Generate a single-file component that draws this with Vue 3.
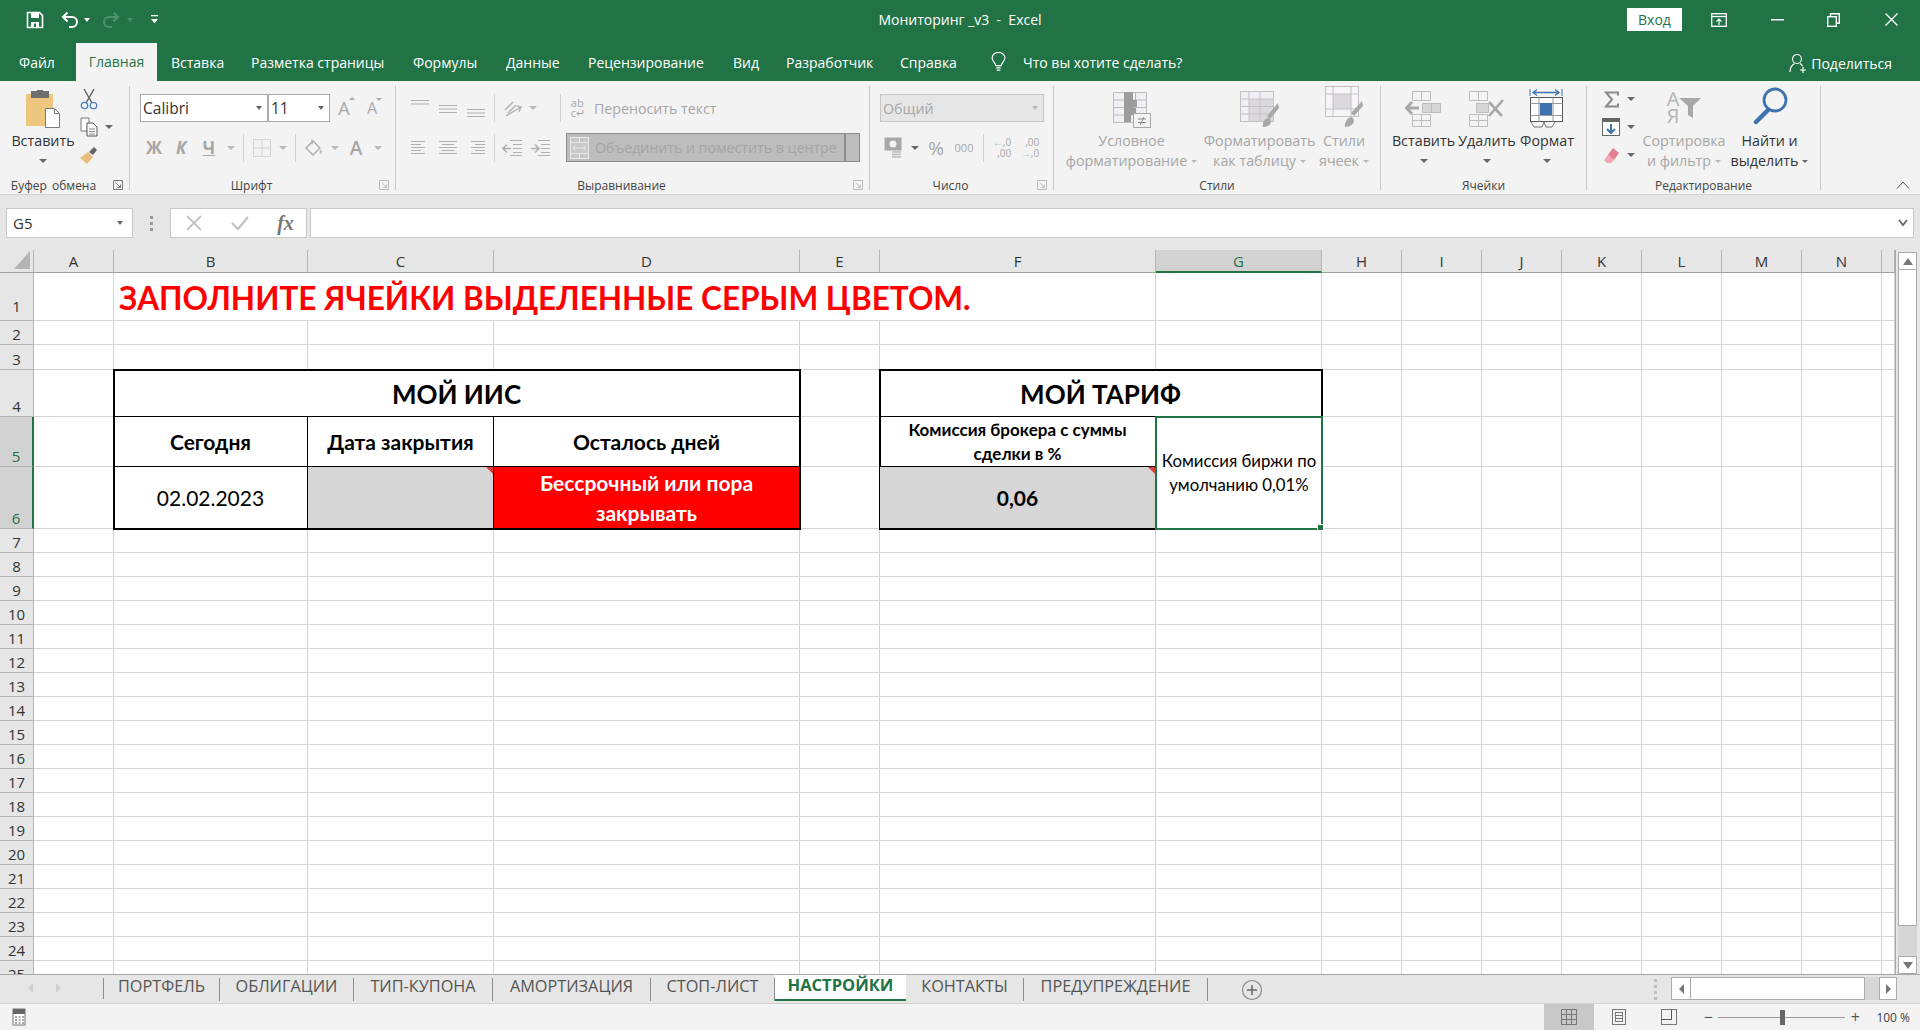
<script setup>
const columns = ['A', 'B', 'C', 'D', 'E', 'F', 'G', 'H', 'I', 'J', 'K', 'L', 'M', 'N', '']
const rows = Array.from({ length: 25 }, (_, i) => i + 1)

const menu = ['Вставка', 'Разметка страницы', 'Формулы', 'Данные', 'Рецензирование', 'Вид', 'Разработчик', 'Справка']
const sheets = ['ПОРТФЕЛЬ', 'ОБЛИГАЦИИ', 'ТИП-КУПОНА', 'АМОРТИЗАЦИЯ', 'СТОП-ЛИСТ', 'НАСТРОЙКИ', 'КОНТАКТЫ', 'ПРЕДУПРЕЖДЕНИЕ']

// y of the lines in each vertical alignment glyph
const alignTop = [
  { y: 2, lines: [0, 1] },
  { y: 7, lines: [0, 1, 2] },
  { y: 11, lines: [0, 1, 2] }
]
// x1/x2 of the lines in each horizontal alignment glyph
const alignLeft = [
  [[1, 15], [1, 11], [1, 15], [1, 11], [1, 15]],
  [[1, 19], [4, 16], [1, 19], [4, 16], [1, 19]],
  [[5, 19], [9, 19], [5, 19], [9, 19], [5, 19]]
]
</script>

<template>
  <div class="app">
    <header class="titlebar">
      <div class="qat">
        <svg class="q-save" width="18" height="18" viewBox="0 0 18 18"><path d="M1.5 1.5h12l3 3v12h-15z" fill="none" stroke="#fff" stroke-width="1.6"/><rect x="5" y="2" width="8" height="5" fill="#fff"/><rect x="5" y="11" width="8" height="5" fill="#fff"/><rect x="8" y="12.5" width="2" height="3.5" fill="#217346"/></svg>
        <svg class="q-undo" width="20" height="18" viewBox="0 0 20 18"><path d="M3 6h9a4.6 4.6 0 0 1 0 10H9" fill="none" stroke="#fff" stroke-width="2"/><path d="M7.5 1.5 3 6l4.5 4.5" fill="none" stroke="#fff" stroke-width="2"/></svg>
        <i class="caret white q-c1"></i>
        <svg class="q-redo" width="20" height="18" viewBox="0 0 20 18"><path d="M17 6H8a4.6 4.6 0 0 0 0 10h3" fill="none" stroke="#4f9272" stroke-width="2"/><path d="M12.500 1.500 17 6l-4.500 4.500" fill="none" stroke="#4f9272" stroke-width="2"/></svg>
        <i class="caret dim q-c2"></i>
        <svg class="q-more" width="7" height="9" viewBox="0 0 7 9"><rect y="0" width="7" height="1.300" fill="#fff"/><path d="M0 4h7L3.500 8.500z" fill="#fff"/></svg>
      </div>
      <div class="doc-title">Мониторинг _v3&nbsp; - &nbsp;Excel</div>
      <div class="win">
        <span class="signin">Вход</span>
        <svg class="w-opt" width="16" height="14" viewBox="0 0 16 14"><rect x=".7" y=".7" width="14.600" height="12.600" fill="none" stroke="#fff" stroke-width="1.300"/><path d="M1 3.500h14" stroke="#fff" stroke-width="1.300"/><path d="M8 12V6.500M5.500 8.500 8 6l2.500 2.500" fill="none" stroke="#fff" stroke-width="1.200"/></svg>
        <svg class="w-min" width="13" height="2" viewBox="0 0 13 2"><rect width="13" height="1.500" fill="#fff"/></svg>
        <svg class="w-max" width="13" height="14" viewBox="0 0 13 14"><rect x=".7" y="3.700" width="8.600" height="9.600" fill="none" stroke="#fff" stroke-width="1.400"/><path d="M3.500 3.500V.7h8.800v9.600H9.500" fill="none" stroke="#fff" stroke-width="1.400"/></svg>
        <svg class="w-close" width="13" height="13" viewBox="0 0 13 13"><path d="M.5.5l12 12M12.500.5l-12 12" stroke="#fff" stroke-width="1.400"/></svg>
      </div>
    </header>

    <nav class="tabs">
      <span class="tab-file">Файл</span>
      <span class="tab-home">Главная</span>
      <div class="menu">
        <span v-for="m in menu" :key="m">{{ m }}</span>
      </div>
      <svg class="bulb" width="15" height="20" viewBox="0 0 16 22"><path d="M5 15c0-3-4-4.500-4-8.500a7 6 0 0 1 14 0c0 4-4 5.500-4 8.500z" fill="none" stroke="#fff" stroke-width="1.300"/><path d="M5.500 17.500h5M6 20h4" stroke="#fff" stroke-width="1.500"/></svg>
      <span class="tell">Что вы хотите сделать?</span>
      <span class="share">
        <svg width="18" height="20" viewBox="0 0 18 20"><circle cx="8" cy="6" r="4.500" fill="none" stroke="#fff" stroke-width="1.200"/><path d="M1 19c0-4 2-7 4.500-8.500M11 10.500c1 .6 2 1.600 2.500 2.800" fill="none" stroke="#fff" stroke-width="1.200"/><path d="M14 14v6M11 17h6" stroke="#fff" stroke-width="1.200"/></svg>
        Поделиться
      </span>
    </nav>

    <section class="ribbon">
      <div class="grp g-clip">
        <div class="grp-body">
          <div class="big b-paste">
            <div class="big-icon">
              <svg width="36" height="38" viewBox="0 0 36 38"><rect x="1" y="4" width="27" height="32" fill="#eec77e"/><rect x="6" y="1" width="18" height="7" fill="#6f6f6f"/><rect x="12" y="0" width="6" height="3" fill="#6f6f6f"/><path d="M20.500 18.500h9l5 5v14h-14z" fill="#fff" stroke="#7a7a7a"/><path d="M29.500 18.500v5h5" fill="none" stroke="#7a7a7a"/></svg>
            </div>
            <div class="big-text on">Вставить</div>
            <div class="big-text"><i class="caret"></i></div>
          </div>
          <div class="clip-tools">
            <svg width="18" height="22" viewBox="0 0 18 22"><path d="M4 1l8 14M14 1 6 15" stroke="#666" stroke-width="1.500"/><circle cx="4.500" cy="17.500" r="3.200" fill="none" stroke="#4a7ebb" stroke-width="1.300"/><circle cx="13.500" cy="17.500" r="3.200" fill="none" stroke="#4a7ebb" stroke-width="1.300"/></svg>
            <span></span>
            <svg width="18" height="20" viewBox="0 0 18 20"><path d="M1 1h8v13H1z" fill="#fff" stroke="#777"/><path d="M7 6h6l4 4v9H7z" fill="#fff" stroke="#555"/><path d="M9 12h6M9 14.500h6M9 17h6" stroke="#888"/></svg>
            <i class="caret"></i>
            <svg width="20" height="18" viewBox="0 0 20 18"><path d="M1 12l8-6 5 5-6 7z" fill="#e7bf7a"/><path d="M10 6l5-5 3 3-4 5z" fill="#666"/></svg>
            <span></span>
          </div>
        </div>
        <div class="grp-label shift">Буфер обмена</div>
        <svg class="launcher" width="10" height="10" viewBox="0 0 10 10"><path d="M.5 9.500V.5h9v9zM2.500 2.500l5 5M7.500 4.500v3h-3" fill="none" stroke="#777"/></svg>
      </div>

      <div class="grp g-font">
        <div class="grp-body col">
          <div class="r1 font-r1">
            <div class="combo">Calibri<i class="caret"></i></div>
            <div class="combo">11<i class="caret"></i></div>
            <span class="glyph-a">A<i class="up"></i></span>
            <span class="glyph-a small">A<i class="down"></i></span>
          </div>
          <div class="r2 font-r2">
            <b class="fmt">Ж</b>
            <b class="fmt it">К</b>
            <b class="fmt un">Ч</b>
            <i class="caret off"></i>
            <i class="vsep"></i>
            <svg width="18" height="18" viewBox="0 0 18 18"><path d="M.5.5h17v17H.5zM9 .5v17M.5 9h17" fill="none" stroke="#b5b5b5" stroke-dasharray="1 1"/></svg>
            <i class="caret off"></i>
            <i class="vsep"></i>
            <svg width="20" height="20" viewBox="0 0 20 20"><path d="M2 10l7-7 7 7-7 7z" fill="none" stroke="#a8a8a8" stroke-width="1.300"/><path d="M8 1.500v5" stroke="#a8a8a8"/><path d="M17 11c-1 2-2 3-1 5 2 0 2.500-3 1-5z" fill="#bdbdbd"/></svg>
            <i class="caret off"></i>
            <span class="fmt-a">A</span>
            <i class="caret off"></i>
          </div>
        </div>
        <div class="grp-label shift">Шрифт</div>
        <svg class="launcher" width="10" height="10" viewBox="0 0 10 10"><path d="M.5 9.500V.5h9v9zM2.500 2.500l5 5M7.500 4.500v3h-3" fill="none" stroke="#bbb"/></svg>
      </div>

      <div class="grp g-align">
        <div class="grp-body col">
          <div class="r1 align-r1">
            <svg v-for="a in alignTop" :key="a.y" width="20" height="20" viewBox="0 0 20 20">
              <path v-for="l in a.lines" :key="l" :d="`M1 ${a.y + l * 3.500 + .5}h18`" stroke="#b0b0b0"/>
            </svg>
            <i class="vsep"></i>
            <svg width="22" height="20" viewBox="0 0 22 20"><path d="M3 12l8-8M6 15l8-8" stroke="#b0b0b0" stroke-width="1.500"/><path d="M4 18l15-9-4-1M19 9l-2 5" fill="none" stroke="#b0b0b0" stroke-width="1.300"/></svg>
            <i class="caret off"></i>
            <span></span>
            <i class="vsep"></i>
            <span class="wrap-ab"><span>ab</span><span>c↵</span></span>
            <span class="off-text">Переносить текст</span>
          </div>
          <div class="r2 align-r2">
            <svg v-for="(a, k) in alignLeft" :key="k" width="20" height="16" viewBox="0 0 20 16">
              <path v-for="(l, i) in a" :key="i" :d="`M${l[0]} ${i * 3 + 1.500}H${l[1]}`" stroke="#b0b0b0"/>
            </svg>
            <i class="vsep"></i>
            <svg width="20" height="18" viewBox="0 0 20 18"><path d="M8 1.500h12M11 5.500h9M11 9.500h9M11 13.500h9M8 16.500h12" stroke="#b0b0b0"/><path d="M9 9.500H1M5 5.500l-4 4 4 4" fill="none" stroke="#b0b0b0" stroke-width="1.600"/></svg>
            <svg width="20" height="18" viewBox="0 0 20 18"><path d="M8 1.500h12M11 5.500h9M11 9.500h9M11 13.500h9M8 16.500h12" stroke="#b0b0b0"/><path d="M1 9.500h8M5 5.500l4 4-4 4" fill="none" stroke="#b0b0b0" stroke-width="1.600"/></svg>
            <span></span>
            <div class="merge">
              <svg width="20" height="22" viewBox="0 0 20 22"><rect x=".5" y=".5" width="18" height="21" fill="#c8c8c8" stroke="#e8e8e8"/><path d="M.5 5.500h18M.5 16.500h18M9.500 .5v5M9.500 16.500v5" stroke="#e8e8e8"/><path d="M3 11h13M5.500 8.500 3 11l2.500 2.500M13.500 8.500 16 11l-2.500 2.500" fill="none" stroke="#e8e8e8"/></svg>
              <span class="merge-text">Объединить и поместить в центре</span>
              <span class="merge-drop"></span>
            </div>
          </div>
        </div>
        <div class="grp-label shift">Выравнивание</div>
        <svg class="launcher" width="10" height="10" viewBox="0 0 10 10"><path d="M.5 9.500V.5h9v9zM2.500 2.500l5 5M7.500 4.500v3h-3" fill="none" stroke="#bbb"/></svg>
      </div>

      <div class="grp g-num">
        <div class="grp-body col">
          <div class="r1">
            <div class="combo off-combo">Общий<i class="caret off"></i></div>
          </div>
          <div class="r2 num-r2">
            <svg width="20" height="22" viewBox="0 0 20 22"><rect x=".5" y=".5" width="17" height="13" fill="#a8a8a8"/><circle cx="9" cy="7" r="3.500" fill="#f3f3f3"/><path d="M8 15h9M8 17.500h9M8 20h9" stroke="#bbb" stroke-width="1.500"/></svg>
            <i class="caret"></i>
            <span class="pct">%</span>
            <span class="thou">000</span>
            <i class="vsep"></i>
            <span class="dec"><span>←,0</span><span>,00</span></span>
            <span class="dec"><span>,00</span><span>→,0</span></span>
          </div>
        </div>
        <div class="grp-label shift">Число</div>
        <svg class="launcher" width="10" height="10" viewBox="0 0 10 10"><path d="M.5 9.500V.5h9v9zM2.500 2.500l5 5M7.500 4.500v3h-3" fill="none" stroke="#bbb"/></svg>
      </div>

      <div class="grp g-styles">
        <div class="grp-body">
          <div class="big b-cond">
            <div class="big-icon">
              <svg width="38" height="36" viewBox="0 0 38 36"><path d="M.5.5h33v30H.5zM.5 8h33M.5 15.500h33M.5 23h33M11.500.5v30M22.500.5v30" fill="#f1eef4" stroke="#bcbcbc"/><path d="M11 0h9v8h4v7h-4v1h3v7h-5v7h-7z" fill="#9d9d9d"/><rect x="20.500" y="21.500" width="17" height="14" fill="#f3f3f3" stroke="#a8a8a8"/><path d="M25 27h8M25 30.500h8M31 25l-4 8" stroke="#8a8a8a"/></svg>
            </div>
            <div class="big-text">Условное</div>
            <div class="big-text">форматирование<i class="caret off after"></i></div>
          </div>
          <div class="big b-table">
            <div class="big-icon">
              <svg width="40" height="38" viewBox="0 0 40 38"><rect x=".5" y="1.500" width="33" height="30" fill="#f1eef4" stroke="#c2c2c2"/><rect x="9" y="9" width="24" height="22" fill="#dcd9de"/><path d="M.5 9h33M.5 16.500h33M.5 24h33M9 1.500v30M20 1.500v30" stroke="#c2c2c2"/><path d="M38 13l1 5-9 11-3-3z" fill="#a8a8a8"/><path d="M23 37c-1-5 2-9 6-9l2 3c0 4-4 6-8 6z" fill="#a8a8a8"/></svg>
            </div>
            <div class="big-text">Форматировать</div>
            <div class="big-text">как таблицу<i class="caret off after"></i></div>
          </div>
          <div class="big b-cellstyle">
            <div class="big-icon">
              <svg width="38" height="42" viewBox="0 0 38 42"><rect x=".5" y=".5" width="33" height="30" fill="#f6f4f7" stroke="#c2c2c2"/><rect x="8" y="8" width="18" height="15" fill="#dcd9de"/><path d="M.5 8h33M.5 23h33M8 .5v30M26 .5v30" stroke="#c2c2c2"/><path d="M37 15l1 5-9 10-3-3z" fill="#a8a8a8"/><path d="M20 41c-1-5 3-10 7-10l2 3c0 4-4 7-9 7z" fill="#a8a8a8"/></svg>
            </div>
            <div class="big-text">Стили</div>
            <div class="big-text">ячеек<i class="caret off after"></i></div>
          </div>
        </div>
        <div class="grp-label">Стили</div>
      </div>

      <div class="grp g-cells">
        <div class="grp-body">
          <div class="big b-cell1">
            <div class="big-icon">
              <svg width="38" height="38" viewBox="0 0 38 38"><path d="M7.500 1.500h18v9h-18zM16.500 1.500v9M7.500 24.500h18v12h-18zM16.500 24.500v12M7.500 30.500h18" fill="none" stroke="#bdbdbd"/><path d="M17.500 13.500h18v9h-18zM26.500 13.500v9" fill="#d6d6d6" stroke="#bdbdbd"/><path d="M14 18H2M7 12l-5.500 6L7 24" fill="none" stroke="#a8a8a8" stroke-width="3"/></svg>
            </div>
            <div class="big-text on">Вставить</div>
            <div class="big-text"><i class="caret"></i></div>
          </div>
          <div class="big b-cell2">
            <div class="big-icon">
              <svg width="38" height="38" viewBox="0 0 38 38"><path d="M1.500 1.500h18v9h-18zM10.500 1.500v9M1.500 24.500h18v12h-18zM10.500 24.500v12M1.500 30.500h18" fill="none" stroke="#bdbdbd"/><path d="M8.500 13.500h12v9h-12z" fill="#d6d6d6" stroke="#bdbdbd"/><path d="M21 12l13 14M35 10 21 26" stroke="#a8a8a8" stroke-width="2.600"/></svg>
            </div>
            <div class="big-text on">Удалить</div>
            <div class="big-text"><i class="caret"></i></div>
          </div>
          <div class="big b-cell3">
            <div class="big-icon">
              <svg width="36" height="40" viewBox="0 0 36 40"><path d="M1 1v7M33 1v7" stroke="#3e74ad"/><path d="M4 4.500h26M8 1.500 4 4.500l4 3M26 1.500l4 3-4 3" fill="none" stroke="#3e74ad" stroke-width="1.300"/><rect x="1.500" y="9.500" width="32" height="24" fill="#fff" stroke="#555"/><path d="M1.500 15.500h32M1.500 27.500h32M10 9.500v24M24 9.500v24" stroke="#999"/><rect x="11" y="15" width="12" height="12" fill="#3e74ad"/><path d="M2 34l3 5h8l2-5M15 34l2 5h6l3-5" fill="none" stroke="#777"/></svg>
            </div>
            <div class="big-text on">Формат</div>
            <div class="big-text"><i class="caret"></i></div>
          </div>
        </div>
        <div class="grp-label">Ячейки</div>
      </div>

      <div class="grp g-edit">
        <div class="grp-body">
          <div class="edit-tools">
            <svg width="15" height="17" viewBox="0 0 15 17"><path d="M14 4.500V1.500H2l6 7-6 7h12v-3" fill="none" stroke="#8a8a8a" stroke-width="2"/></svg>
            <i class="caret"></i>
            <svg width="18" height="18" viewBox="0 0 18 18"><rect x=".5" y=".5" width="17" height="17" fill="#fff" stroke="#666"/><rect x="1" y="1" width="16" height="3" fill="#666"/><path d="M9 6v9M5 11l4 4 4-4" fill="none" stroke="#3e74ad" stroke-width="2"/></svg>
            <i class="caret"></i>
            <svg width="17" height="17" viewBox="0 0 17 17"><path d="M10 1l6 5-5 7-6-5z" fill="#e57e92"/><path d="M5 8l6 5-3 3H4l-3-3z" fill="#f2a6b4"/></svg>
            <i class="caret"></i>
          </div>
          <div class="big b-sort">
            <div class="big-icon">
              <span class="sort-az"><span>А</span><span>Я</span></span>
              <svg class="funnel" width="22" height="22" viewBox="0 0 22 22"><path d="M0 1h22l-8 8v12l-5-3V9z" fill="#a8a8a8"/></svg>
            </div>
            <div class="big-text">Сортировка</div>
            <div class="big-text">и фильтр<i class="caret off after"></i></div>
          </div>
          <div class="big b-find">
            <div class="big-icon">
              <svg width="38" height="40" viewBox="0 0 38 40"><circle cx="24" cy="15" r="11" fill="none" stroke="#3e74ad" stroke-width="2.800"/><path d="M17 25 5 37" stroke="#3e74ad" stroke-width="4.500" stroke-linecap="round"/></svg>
            </div>
            <div class="big-text on">Найти и</div>
            <div class="big-text on">выделить<i class="caret after"></i></div>
          </div>
        </div>
        <div class="grp-label">Редактирование</div>
      </div>

      <div class="ribbon-end">
        <svg width="14" height="8" viewBox="0 0 14 8"><path d="M1 7.500 7 1l6 6.500" fill="none" stroke="#555"/></svg>
      </div>
    </section>

    <section class="fbar">
      <div class="namebox">G5<i class="caret"></i></div>
      <div class="fdots"><i></i><i></i><i></i></div>
      <div class="fbtns">
        <svg width="16" height="16" viewBox="0 0 16 16"><path d="M1 1l14 14M15 1 1 15" stroke="#c4c4c4" stroke-width="1.800"/></svg>
        <svg width="18" height="16" viewBox="0 0 18 16"><path d="M1 8l6 6L17 2" fill="none" stroke="#c4c4c4" stroke-width="2.400"/></svg>
        <span class="fx">fx</span>
      </div>
      <div class="finput">
        <svg width="10" height="8" viewBox="0 0 10 8"><path d="M1 1l4 5 4-5" fill="none" stroke="#666" stroke-width="1.800"/></svg>
      </div>
    </section>

    <section class="sheet-area">
      <div class="sheet">
        <!-- empty worksheet: headers and gridlines -->
        <div class="layer">
          <div class="corner"><i></i></div>
          <div v-for="c in columns" :key="c" class="col-head" :class="{ sel: c === 'G' }">{{ c }}</div>
          <template v-for="r in rows" :key="r">
            <div class="row-head" :class="{ sel: r === 5 || r === 6, first: r === 1 }"><span>{{ r }}</span></div>
            <div v-for="c in columns" :key="c" class="cell"></div>
          </template>
        </div>

        <!-- filled cells sit on the same tracks -->
        <div class="layer">
          <div class="title-cell">ЗАПОЛНИТЕ ЯЧЕЙКИ ВЫДЕЛЕННЫЕ СЕРЫМ ЦВЕТОМ.</div>

          <div class="box iis">
            <div class="tc head-xl span3">МОЙ ИИС</div>
            <div class="tc head-md">Сегодня</div>
            <div class="tc head-md">Дата закрытия</div>
            <div class="tc head-md">Осталось дней</div>
            <div class="tc plain-lg">02.02.2023</div>
            <div class="tc fill-grey note"></div>
            <div class="tc fill-red">Бессрочный или пора<br>закрывать</div>
          </div>

          <div class="box tariff">
            <div class="tc head-xl span2">МОЙ ТАРИФ</div>
            <div class="tc head-sm">Комиссия брокера с суммы<br>сделки в %</div>
            <div class="tc fill-grey note value">0,06</div>
          </div>

          <div class="selected">Комиссия биржи по<br>умолчанию 0,01%</div>
        </div>
      </div>

      <div class="vscroll">
        <div class="sb-btn"><svg width="10" height="7" viewBox="0 0 10 7"><path d="M5 0l5 7H0z" fill="#777"/></svg></div>
        <div class="sb-thumb"></div>
        <div class="sb-track"></div>
        <div class="sb-btn"><svg width="10" height="7" viewBox="0 0 10 7"><path d="M0 0h10L5 7z" fill="#777"/></svg></div>
      </div>
    </section>

    <section class="sheetbar">
      <div class="nav-arrows">
        <svg width="5" height="10" viewBox="0 0 5 10"><path d="M5 0v10L0 5z" fill="#cfcfcf"/></svg>
        <svg width="5" height="10" viewBox="0 0 5 10"><path d="M0 0v10l5-5z" fill="#cfcfcf"/></svg>
      </div>
      <div class="sheet-tabs">
        <span v-for="s in sheets" :key="s" class="stab" :class="{ active: s === 'НАСТРОЙКИ' }">{{ s }}</span>
      </div>
      <svg class="add" width="22" height="22" viewBox="0 0 22 22"><circle cx="11" cy="11" r="9.500" fill="none" stroke="#8a8a8a" stroke-width="1.200"/><path d="M11 6v10M6 11h10" stroke="#666" stroke-width="1.500"/></svg>
      <div class="hdots"><i></i><i></i><i></i><i></i></div>
      <div class="hscroll">
        <div class="hb-btn"><svg width="5" height="10" viewBox="0 0 5 10"><path d="M5 0v10L0 5z" fill="#777"/></svg></div>
        <div class="hb-thumb"></div>
        <div class="hb-track"></div>
        <div class="hb-btn end"><svg width="5" height="10" viewBox="0 0 5 10"><path d="M0 0v10l5-5z" fill="#777"/></svg></div>
      </div>
    </section>

    <footer class="status">
      <svg class="st-icon" width="14" height="18" viewBox="0 0 14 18"><rect x="1" y="1" width="12" height="16" fill="#fff" stroke="#777"/><rect x="1" y="1" width="12" height="5" fill="#666"/><path d="M3 9h2M6.500 9h2M10 9h2M3 12h2M6.500 12h2M10 12h2M3 15h2M6.500 15h2M10 15h2" stroke="#555"/></svg>
      <div class="st-right">
        <span class="view on">
          <svg width="16" height="16" viewBox="0 0 16 16"><path d="M.5.5h15v15H.5zM5.500.5v15M10.500.5v15M.5 5.500h15M.5 10.500h15" fill="none" stroke="#777"/></svg>
        </span>
        <span class="view">
          <svg width="14" height="16" viewBox="0 0 14 16"><rect x=".5" y=".5" width="13" height="15" fill="none" stroke="#777"/><rect x="3.500" y="3.500" width="7" height="9" fill="none" stroke="#777"/><path d="M3.500 6.500h7M3.500 9.500h7" stroke="#777"/></svg>
        </span>
        <span class="view">
          <svg width="16" height="16" viewBox="0 0 16 16"><rect x=".5" y=".5" width="15" height="15" fill="none" stroke="#777"/><path d="M.5 10.500h10V.5" fill="none" stroke="#555"/></svg>
        </span>
        <div class="zoom">
          <span class="z-sign">−</span>
          <div class="slider"><i></i></div>
          <span class="z-sign">+</span>
          <span class="z-val">100 %</span>
        </div>
      </div>
    </footer>
  </div>
</template>

<style>
html, body { margin: 0; overflow: hidden; background: #fff; }
</style>

<style scoped>
.app {
  width: 1920px;
  height: 1030px;
  overflow: hidden;
  display: flex;
  flex-direction: column;
  font-family: "Open Sans", "Noto Sans", sans-serif;
  font-size: 14px;
  color: #444;
}

/* title bar */
.titlebar {
  height: 43px;
  flex: none;
  background: #217346;
  color: #fff;
  display: grid;
  grid-template-columns: 1fr 190px 1fr;
  align-items: center;
}
.qat { display: flex; align-items: center; padding-left: 26px; margin-top: -4px; }
.q-undo { margin-left: 16px; }
.q-c1 { margin-left: 4px; }
.q-redo { margin-left: 11px; }
.q-c2 { margin-left: 6px; }
.q-more { margin-left: 18px; }
.doc-title { white-space: nowrap; text-align: center; margin-top: -4px; font-size: 14px; }
.win { display: flex; align-items: center; justify-content: flex-end; margin-top: -4px; }
.signin {
  width: 55px;
  height: 23px;
  background: #fff;
  color: #217346;
  text-align: center;
  line-height: 23px;
  font-size: 14px;
}
.w-opt { margin-left: 29px; }
.w-min { margin-left: 44px; }
.w-max { margin-left: 43px; }
.w-close { margin: 0 22px 0 45px; }

/* tab row */
.tabs {
  height: 38px;
  flex: none;
  background: #217346;
  color: #fff;
  display: flex;
  align-items: center;
  font-size: 14px;
  white-space: nowrap;
}
.tab-file { margin-left: 19px; width: 57px; }
.tab-home {
  width: 81px;
  height: 38px;
  line-height: 38px;
  text-align: center;
  background: #f3f3f3;
  color: #217346;
  margin-right: 14px;
}
.menu { display: grid; grid-template-columns: 80px 162px 93px 82px 145px 53px 114px 91px; }
.tell { margin-left: 17px; }
.share { margin-left: auto; margin-right: 28px; display: flex; align-items: center; gap: 4px; padding-top: 2px; }

/* ribbon */
.ribbon {
  height: 114px;
  flex: none;
  box-sizing: border-box;
  padding-top: 5px;
  background: #f3f3f3;
  border-bottom: 1px solid #d2d2d2;
  display: flex;
}
.grp {
  height: 104px;
  flex: none;
  box-sizing: border-box;
  border-right: 1px solid #c8c8c8;
  display: flex;
  flex-direction: column;
  position: relative;
}
.g-clip { width: 130px; }
.g-font { width: 266px; }
.g-align { width: 474px; }
.g-num { width: 184px; }
.g-styles { width: 327px; }
.g-cells { width: 206px; }
.g-edit { width: 234px; }
.grp-body { height: 92px; flex: none; display: flex; }
.grp-body.col { flex-direction: column; padding: 8px 0 0 10px; box-sizing: border-box; }
.grp-label { text-align: center; font-size: 12px; line-height: 16px; color: #444; }
.grp-label.shift { padding-right: 22px; word-spacing: 2px; }
.launcher { position: absolute; right: 6px; bottom: 0; }

.big { display: flex; flex-direction: column; align-items: center; flex: none; color: #a6a6a6; font-size: 14.300px; white-space: nowrap; }
.big-icon { height: 45px; display: flex; justify-content: center; align-items: flex-end; padding-bottom: 3px; box-sizing: border-box; }
.big-text { height: 20px; line-height: 20px; display: flex; align-items: center; justify-content: center; }
.big-text.on { color: #333; }
.b-paste { width: 86px; }
.b-cond { width: 143px; margin-left: 6px; }
.b-table { width: 113px; }
.b-cellstyle { width: 56px; }
.b-cell1 { width: 67px; margin-left: 9px; }
.b-cell2 { width: 60px; }
.b-cell3 { width: 60px; }
.b-sort { width: 88px; }
.b-find { width: 83px; }
.b-find .big-icon { padding-bottom: 6px; }
.b-sort .big-icon { padding-bottom: 8px; align-items: flex-start; padding-top: 4px; }
.funnel { margin-top: 7px; }

.clip-tools {
  width: 44px;
  display: grid;
  grid-template-columns: 22px 18px;
  grid-template-rows: 26px 29px 28px;
  align-items: center;
  justify-items: center;
  margin-left: -8px;
}
.edit-tools {
  width: 53px;
  margin-left: 14px;
  margin-right: -14px;
  display: grid;
  grid-template-columns: 20px 20px;
  grid-template-rows: 26px 29px 28px;
  align-items: center;
  justify-items: center;
}

.caret {
  display: inline-block;
  width: 0;
  height: 0;
  border-left: 4px solid transparent;
  border-right: 4px solid transparent;
  border-top: 4px solid #666;
}
.caret.off { border-top-color: #b8b8b8; }
.caret.white { border-top-color: #fff; border-left-width: 3px; border-right-width: 3px; }
.caret.dim { border-top-color: #4f9272; border-left-width: 3px; border-right-width: 3px; }
.caret.after { margin-left: 4px; border-left-width: 3px; border-right-width: 3px; border-top-width: 3px; }

.r1 { height: 28px; flex: none; display: flex; align-items: center; }
.r2 { height: 29px; flex: none; margin-top: 11px; display: grid; align-items: center; justify-items: center; }
.font-r1 { display: grid; grid-template-columns: 128px 62px 28px 28px; justify-items: center; }
.font-r2 { grid-template-columns: 28px 26px 30px 14px 10px 28px 14px 10px 28px 14px 28px 16px; }
.align-r1 { display: grid; grid-template-columns: 28px 28px 28px 8px 30px 10px 18px 8px 28px auto; justify-items: center; align-items: center; }
.align-r2 { grid-template-columns: 28px 28px 28px 8px 28px 28px 12px 294px; }
.num-r2 { grid-template-columns: 28px 14px 28px 28px 10px 28px 28px; }

.combo {
  width: 100%;
  height: 28px;
  box-sizing: border-box;
  background: #fff;
  border: 1px solid #ababab;
  display: flex;
  align-items: center;
  justify-content: space-between;
  padding: 0 5px 0 2px;
  font-size: 15.500px;
  color: #333;
}
.combo .caret { border-left-width: 3.500px; border-right-width: 3.500px; }
.off-combo { width: 164px; background: #e6e6e6; border-color: #c8c8c8; color: #a6a6a6; font-size: 14.300px; }

.glyph-a { font-size: 18px; color: #a8a8a8; position: relative; }
.glyph-a.small { font-size: 16px; }
.glyph-a i { position: absolute; right: -5px; top: 1px; width: 0; height: 0; border-left: 3px solid transparent; border-right: 3px solid transparent; }
.glyph-a .up { border-bottom: 3px solid #a8a8a8; }
.glyph-a .down { border-top: 3px solid #a8a8a8; }

.fmt { font-size: 17px; color: #a6a6a6; font-weight: 700; font-style: normal; }
.fmt.it { font-style: italic; }
.fmt.un { text-decoration: underline; }
.fmt-a { font-size: 19px; color: #a6a6a6; font-weight: 600; }
.vsep { width: 1px; height: 28px; background: #d0d0d0; display: block; }

.off-text { color: #a6a6a6; font-size: 14.200px; white-space: nowrap; justify-self: start; margin-left: 2px; }
.wrap-ab { display: flex; flex-direction: column; font-size: 11px; line-height: 10px; color: #a8a8a8; }
.sort-az { display: flex; flex-direction: column; font-size: 20px; line-height: 17px; color: #b4b4b4; }

.merge {
  width: 294px;
  height: 29px;
  box-sizing: border-box;
  background: #bdbdbd;
  border: 1px solid #8c8c8c;
  display: flex;
  align-items: center;
  padding-left: 3px;
  white-space: nowrap;
  justify-self: start;
}
.merge-text { color: #a4a4a4; font-size: 14.200px; margin-left: 5px; flex: 1; }
.merge-drop { width: 15px; height: 100%; border-left: 2px solid #8c8c8c; box-sizing: border-box; }

.pct { font-size: 19px; color: #a6a6a6; }
.thou { font-size: 11px; color: #a6a6a6; }
.dec { display: flex; flex-direction: column; font-size: 10px; line-height: 11px; color: #a6a6a6; align-items: flex-end; }

.ribbon-end { flex: 1; display: flex; align-items: flex-end; justify-content: flex-end; padding: 0 10px 5px 0; }

/* formula bar */
.fbar {
  height: 55px;
  flex: none;
  box-sizing: border-box;
  background: #e6e6e6;
  padding: 13px 6px 0;
  display: flex;
  align-items: flex-start;
}
.namebox {
  width: 127px;
  height: 30px;
  box-sizing: border-box;
  background: #fff;
  border: 1px solid #c8c8c8;
  display: flex;
  align-items: center;
  justify-content: space-between;
  padding: 0 9px 0 6px;
  font-size: 15px;
  color: #333;
}
.namebox .caret { border-left-width: 3.500px; border-right-width: 3.500px; }
.fdots { width: 37px; height: 30px; display: flex; flex-direction: column; gap: 3px; align-items: center; justify-content: center; }
.fdots i { width: 3px; height: 3px; background: #9a9a9a; display: block; }
.fbtns {
  width: 137px;
  height: 30px;
  box-sizing: border-box;
  background: #fff;
  border: 1px solid #c8c8c8;
  display: grid;
  grid-template-columns: 46px 46px 45px;
  align-items: center;
  justify-items: center;
}
.fx { font-family: "Liberation Serif", serif; font-style: italic; font-size: 20px; font-weight: 700; color: #777; }
.finput {
  flex: 1;
  height: 30px;
  margin-left: 3px;
  box-sizing: border-box;
  background: #fff;
  border: 1px solid #c8c8c8;
  display: flex;
  align-items: center;
  justify-content: flex-end;
  padding-right: 5px;
}

/* sheet */
.sheet-area {
  height: 724px;
  flex: none;
  display: flex;
  background: #e6e6e6;
}
.sheet {
  width: 1895px;
  height: 724px;
  overflow: hidden;
  background: #fff;
  display: grid;
  font-family: "Lato", "Open Sans", sans-serif;
  color: #000;
}
.layer {
  grid-area: 1 / 1;
  display: grid;
  grid-template-columns: 34px 80px 194px 186px 306px 80px 276px 166px 80px 80px 80px 80px 80px 80px 80px 13px;
  grid-template-rows: 23px 48px 24px 25px 47px 50px 62px repeat(19, 24px);
}
.corner { background: #e6e6e6; border-right: 1px solid #b4b4b4; border-bottom: 1px solid #9f9f9f; box-sizing: border-box; position: relative; }
.corner i {
  position: absolute;
  right: 3px;
  bottom: 3px;
  width: 0;
  height: 0;
  border-left: 16px solid transparent;
  border-bottom: 18px solid #b4b4b4;
}
.col-head {
  background: #e6e6e6;
  border-right: 1px solid #b4b4b4;
  border-bottom: 1px solid #9f9f9f;
  box-sizing: border-box;
  display: flex;
  align-items: center;
  justify-content: center;
  font-family: "Open Sans", sans-serif;
  font-size: 15px;
  color: #333;
}
.col-head.sel { background: #d2d2d2; color: #217346; border-bottom: 2px solid #217346; }
.row-head {
  background: #e6e6e6;
  border-right: 1px solid #b4b4b4;
  border-bottom: 1px solid #b4b4b4;
  box-sizing: border-box;
  display: flex;
  align-items: flex-end;
  justify-content: center;
  font-family: "Open Sans", sans-serif;
  font-size: 15px;
  line-height: 20px;
  color: #333;
}
.row-head.sel { background: #d2d2d2; color: #217346; border-right: 2px solid #217346; }
.row-head.first { padding-bottom: 4px; }
.cell { border-right: 1px solid #d4d4d4; border-bottom: 1px solid #d4d4d4; box-sizing: border-box; }

.title-cell {
  grid-column: 3 / 8;
  grid-row: 2;
  display: flex;
  align-items: center;
  padding: 3px 0 0 5px;
  box-sizing: border-box;
  font-size: 31.500px;
  font-weight: 700;
  color: #f00;
  white-space: nowrap;
  border-right: 1px solid #d4d4d4;
  border-bottom: 1px solid #d4d4d4;
  background: #fff;
}

.box {
  display: grid;
  outline: 2px solid #000;
  outline-offset: -1px;
  background: #fff;
  grid-template-rows: 47px 50px 62px;
}
.iis { grid-column: 3 / 6; grid-row: 5 / 8; grid-template-columns: 194px 186px 306px; }
/* F4:G4 is merged, so the heading is centred across both columns */
.tariff { grid-column: 7 / 9; grid-row: 5 / 8; grid-template-columns: 276px 166px; }
.tc {
  display: flex;
  align-items: center;
  justify-content: center;
  text-align: center;
  box-sizing: border-box;
  border-right: 1px solid #000;
  border-bottom: 1px solid #000;
}
.span3 { grid-column: 1 / 4; }
.span2 { grid-column: 1 / 3; }
.head-xl { font-size: 26px; font-weight: 700; padding-top: 2px; }
.head-md { font-size: 21px; font-weight: 700; }
.head-sm { grid-column: 1; grid-row: 2; font-size: 17px; font-weight: 700; line-height: 24px; white-space: nowrap; }
.plain-lg { font-size: 21px; }
.fill-grey { background: #d6d6d6; position: relative; }
.fill-red { background: #f00; color: #fff; font-size: 21px; font-weight: 700; line-height: 30px; white-space: nowrap; }
.value { grid-column: 1; grid-row: 3; font-size: 21px; font-weight: 700; }
.note::after {
  content: "";
  position: absolute;
  top: 0;
  right: 0;
  width: 0;
  height: 0;
  border-left: 7px solid transparent;
  border-top: 7px solid #e03a3a;
}
.selected {
  grid-column: 8;
  grid-row: 6 / 8;
  margin: -1px;
  box-sizing: border-box;
  border: 2px solid #217346;
  background: #fff;
  display: flex;
  align-items: center;
  justify-content: center;
  text-align: center;
  font-size: 16.800px;
  line-height: 24px;
  position: relative;
  white-space: nowrap;
}
.selected::after {
  content: "";
  position: absolute;
  right: -3px;
  bottom: -3px;
  width: 5px;
  height: 5px;
  background: #217346;
  border: 1px solid #fff;
}

.vscroll {
  flex: 1;
  box-sizing: border-box;
  border-left: 1px solid #a8a8a8;
  padding: 2px 3px 0 2px;
  display: flex;
  flex-direction: column;
}
.sb-btn {
  height: 18px;
  flex: none;
  background: #fff;
  border: 1px solid #ababab;
  box-sizing: border-box;
  display: flex;
  align-items: center;
  justify-content: center;
}
.sb-thumb { height: 656px; flex: none; background: #fff; border: 1px solid #ababab; border-top: 0; box-sizing: border-box; }
.sb-track { flex: 1; background: #d6d6d6; }

/* sheet tabs */
.sheetbar {
  height: 29px;
  flex: none;
  box-sizing: border-box;
  background: #e6e6e6;
  border-top: 1px solid #a8a8a8;
  display: flex;
  align-items: flex-start;
}
.nav-arrows { width: 103px; height: 26px; display: flex; align-items: center; gap: 23px; padding-left: 28px; box-sizing: border-box; }
.sheet-tabs {
  display: grid;
  grid-template-columns: 116px 134px 139px 158px 124px 131px 118px 184px;
  border-left: 1px solid #8c8c8c;
  margin-top: 3px;
  height: 21px;
}
.stab {
  border-right: 1px solid #8c8c8c;
  text-align: center;
  font-size: 16.300px;
  line-height: 17px;
  color: #555;
  white-space: nowrap;
  box-sizing: border-box;
}
.stab.active {
  margin-top: -3px;
  height: 26px;
  line-height: 20px;
  background: #fff;
  color: #217346;
  font-weight: 700;
  font-size: 16.500px;
  border-right: 0;
  border-bottom: 2px solid #217346;
}
.add { margin: 4px 0 0 33px; }
.hdots { margin-left: 391px; height: 22px; margin-top: 3px; display: flex; flex-direction: column; justify-content: center; gap: 3px; }
.hdots i { width: 3px; height: 3px; background: #bdbdbd; display: block; }
.hscroll { margin-left: 14px; margin-top: 2px; width: 226px; height: 23px; display: flex; }
.hb-btn { width: 20px; height: 23px; flex: none; box-sizing: border-box; background: #fff; border: 1px solid #ababab; display: flex; align-items: center; justify-content: center; }
.hb-thumb { width: 174px; height: 23px; flex: none; background: #fff; border: 1px solid #ababab; border-left: 0; box-sizing: border-box; }
.hb-track { flex: 1; background: #d6d6d6; }
.hb-btn.end { width: 18px; }

/* status bar */
.status {
  flex: 1;
  background: #f3f3f3;
  border-top: 1px solid #d2d2d2;
  display: flex;
  align-items: center;
  justify-content: space-between;
}
.st-icon { margin-left: 12px; }
.st-right { display: flex; height: 100%; align-items: center; padding-right: 10px; }
.view { width: 50px; height: 100%; display: flex; align-items: center; justify-content: center; }
.view.on { background: #c8c8c8; }
.zoom { display: flex; align-items: center; margin-left: 6px; }
.z-sign { font-size: 16px; color: #555; width: 16px; text-align: center; }
.slider { width: 127px; height: 1px; background: #999; position: relative; margin: 0 2px; }
.slider i { position: absolute; left: 62px; top: -7px; width: 5px; height: 15px; background: #666; }
.z-val { margin-left: 13px; font-size: 12px; white-space: nowrap; }
</style>
